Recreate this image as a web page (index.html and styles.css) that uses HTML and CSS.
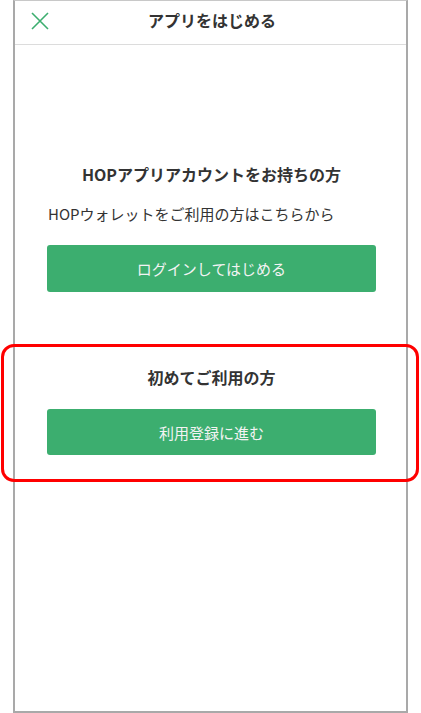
FILE: index.html
```html
<!DOCTYPE html>
<html lang="ja">
<head>
<meta charset="utf-8">
<title>アプリをはじめる</title>
<link rel="stylesheet" href="styles.css">
</head>
<body>
<div class="phone">
  <header class="header">
    <button class="close" aria-label="閉じる">
      <svg width="18" height="18" viewBox="0 0 18 18"><path d="M1 1L17 17M17 1L1 17" stroke="#3cae6f" stroke-width="1.6" fill="none"/></svg>
    </button>
    <h1 class="title">アプリをはじめる</h1>
  </header>
  <main class="content">
    <section class="block block-login">
      <h2 class="heading">HOPアプリアカウントをお持ちの方</h2>
      <p class="note">HOPウォレットをご利用の方はこちらから</p>
      <a class="btn btn-login" href="#">ログインしてはじめる</a>
    </section>
    <section class="block block-register">
      <h2 class="heading">初めてご利用の方</h2>
      <a class="btn btn-register" href="#">利用登録に進む</a>
    </section>
  </main>
</div>
<div class="highlight"></div>
</body>
</html>
```

FILE: styles.css
```css
* { box-sizing: border-box; }
html, body { margin: 0; padding: 0; background: #fff; }
body {
  font-family: "Noto Sans CJK JP", "Noto Sans", sans-serif;
  color: #333;
  width: 421px;
  height: 713px;
  position: relative;
  overflow: hidden;
}
.phone {
  margin-left: 13px;
  width: 395px;
  height: 713px;
  border: 2px solid #a9a9a9;
  border-top: 1px solid #c8c8c8;
  display: flex;
  flex-direction: column;
}
.header {
  height: 44px;
  border-bottom: 1px solid #dcdcdc;
  display: flex;
  align-items: center;
  justify-content: center;
  position: relative;
}
.close {
  position: absolute;
  left: 16px;
  top: 11px;
  width: 18px;
  height: 18px;
  padding: 0;
  border: 0;
  background: none;
  display: block;
}
.close svg { display: block; }
.title {
  margin: 0;
  font-size: 16px;
  font-weight: 700;
  line-height: 24px;
  margin-left: 3px;
  margin-top: -5px;
}
.content {
  padding: 117px 30px 0 32px;
  display: flex;
  flex-direction: column;
}
.block { display: flex; flex-direction: column; }
.heading {
  margin: 0;
  font-size: 16px;
  font-weight: 700;
  line-height: 24px;
  text-align: center;
}
.note {
  margin: 18px 0 0 1px;
  font-size: 15px;
  line-height: 20px;
}
.btn {
  display: flex;
  align-items: center;
  justify-content: center;
  background: #3cae6f;
  color: #f3f3f3;
  text-decoration: none;
  font-size: 15px;
  border-radius: 3px;
}
.btn-login { margin-top: 21px; height: 47px; }
.block-register { margin-top: 73px; }
.btn-register { margin-top: 20px; height: 46px; }
.highlight {
  position: absolute;
  left: 1px;
  top: 344px;
  width: 418px;
  height: 138px;
  border: 3px solid #ff0000;
  border-radius: 13px;
  pointer-events: none;
}
```
